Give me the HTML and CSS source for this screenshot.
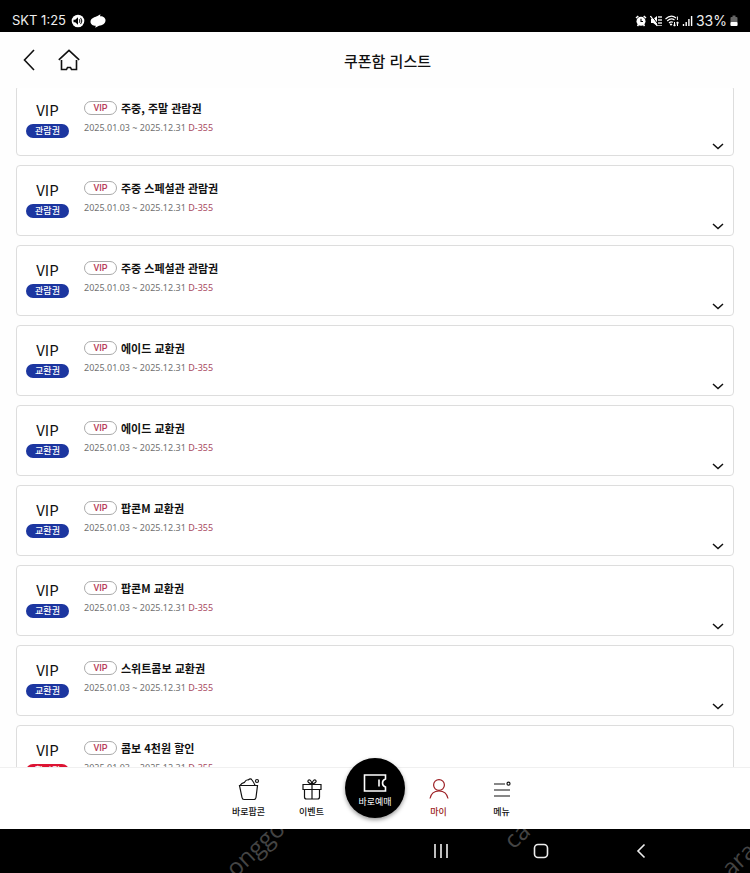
FILE: index.html
```html
<!DOCTYPE html>
<html lang="ko">
<head>
    <meta charset="UTF-8">
    <meta name="viewport" content="width=device-width, initial-scale=1">
    <title>쿠폰함 리스트</title>
    <link rel="stylesheet" href="styles.css">
</head>
<body>
    <!-- Status bar -->
    <div class="status">
        <div class="status-left">
            <span>SKT 1:25</span>
            <svg width="14" height="14" viewBox="0 0 14 14"><circle cx="7" cy="7" r="6.3" fill="#fff"/><path d="M2.5 5.7h1.7L7 3.3v7.4L4.200 8.300H2.500z" fill="#000"/><path d="M8.300 5.300q1.300 1.700 0 3.400M9.600 3.900q2.600 3.100 0 6.200" fill="none" stroke="#000" stroke-width="1"/></svg>
            <svg width="16" height="14" viewBox="0 0 16 14"><path d="M10.500 0.300L10 2.300C13 2 15.800 4 15.500 6.800C15.200 9.600 12.500 11.500 9 11.800L5.200 13.800L5.800 11.800C3 11.800 0.300 10.300 0.500 7.500C0.800 4 5 3 7 2.200Z" fill="#fff"/></svg>
        </div>
        <div class="status-right">
            <svg width="12" height="12" viewBox="0 0 12 12"><path d="M1 3L3.300 1M11 3L8.700 1M2.500 11l1-1.500M9.500 11l-1-1.500" stroke="#fff" stroke-width="1.500"/><circle cx="6" cy="6.300" r="4.500" fill="#fff"/><path d="M6 3.800v2.700h2" fill="none" stroke="#000" stroke-width="1.100"/></svg>
            <svg width="12" height="12" viewBox="0 0 12 12"><path d="M1 4h2.200L7 1v10L3.200 8H1z" fill="#fff"/><path d="M1.500 0.500L8.500 10" stroke="#000" stroke-width="1"/><path d="M0.500 1L7.500 11" stroke="#fff" stroke-width="1.300"/><path d="M9 1v10M11 1v10" stroke="#fff" stroke-width="1.300" stroke-dasharray="2 1"/></svg>
            <svg width="14" height="12" viewBox="0 0 14 12"><path d="M0.500 4Q6 -1 11 3M2.200 6Q6 2.500 9.500 5M4 8Q6 6 8 7.300" fill="none" stroke="#fff" stroke-width="1.200"/><circle cx="6" cy="9.500" r="1.100" fill="#fff"/><path d="M9.500 11V7M8.200 9.600l1.300 1.600 1.300-1.600M12.500 7v4M11.300 8.400l1.200-1.600 1.200 1.600M12.400 1.500v3.500" fill="none" stroke="#fff" stroke-width="1"/></svg>
            <svg width="11" height="12" viewBox="0 0 11 12"><path d="M1.500 11V9M4.200 11V7M6.900 11V4M9.600 11V1" stroke="#fff" stroke-width="1.400"/></svg>
            <span class="percent">33%</span>
            <svg width="8" height="12" viewBox="0 0 8 12"><rect x="2.500" y="0.500" width="3" height="2" fill="#666"/><rect x="0.500" y="2" width="7" height="9" rx="1" fill="#666"/><rect x="0.500" y="7" width="7" height="4" rx="1" fill="#fff"/></svg>
        </div>
    </div>

    <!-- Page header -->
    <header class="header">
        <button type="button" class="icon-button" aria-label="뒤로">
            <svg width="12" height="22" viewBox="0 0 12 22"><path d="M11 1L1.500 11L11 21" fill="none" stroke="#111" stroke-width="1.600"/></svg>
        </button>
        <a class="icon-button" href="#" aria-label="홈">
            <svg width="22" height="22" viewBox="0 0 22 22"><path d="M0.800 10.800L11 1.300L21.200 10.800M3.500 11V20.500H8.500L9.500 18.500H12.500L13.500 20.500H18.500V11" fill="none" stroke="#111" stroke-width="1.600"/></svg>
        </a>
        <h1>쿠폰함 리스트</h1>
    </header>

    <!-- Coupon list -->
    <main class="content">
        <ul class="coupons">
            <li class="coupon">
                <div class="kind"><span class="grade">VIP</span><span class="badge">관람권</span></div>
                <div class="info">
                    <h2><span class="tag">VIP</span>주중, 주말 관람권</h2>
                    <p>2025.01.03 ~ 2025.12.31 <span class="dday">D-355</span></p>
                </div>
                <button type="button" class="more" aria-label="펼치기"><svg width="12" height="7" viewBox="0 0 12 7"><path d="M1 1L6 5.500L11 1"/></svg></button>
            </li>
            <li class="coupon">
                <div class="kind"><span class="grade">VIP</span><span class="badge">관람권</span></div>
                <div class="info">
                    <h2><span class="tag">VIP</span>주중 스페셜관 관람권</h2>
                    <p>2025.01.03 ~ 2025.12.31 <span class="dday">D-355</span></p>
                </div>
                <button type="button" class="more" aria-label="펼치기"><svg width="12" height="7" viewBox="0 0 12 7"><path d="M1 1L6 5.500L11 1"/></svg></button>
            </li>
            <li class="coupon">
                <div class="kind"><span class="grade">VIP</span><span class="badge">관람권</span></div>
                <div class="info">
                    <h2><span class="tag">VIP</span>주중 스페셜관 관람권</h2>
                    <p>2025.01.03 ~ 2025.12.31 <span class="dday">D-355</span></p>
                </div>
                <button type="button" class="more" aria-label="펼치기"><svg width="12" height="7" viewBox="0 0 12 7"><path d="M1 1L6 5.500L11 1"/></svg></button>
            </li>
            <li class="coupon">
                <div class="kind"><span class="grade">VIP</span><span class="badge">교환권</span></div>
                <div class="info">
                    <h2><span class="tag">VIP</span>에이드 교환권</h2>
                    <p>2025.01.03 ~ 2025.12.31 <span class="dday">D-355</span></p>
                </div>
                <button type="button" class="more" aria-label="펼치기"><svg width="12" height="7" viewBox="0 0 12 7"><path d="M1 1L6 5.500L11 1"/></svg></button>
            </li>
            <li class="coupon">
                <div class="kind"><span class="grade">VIP</span><span class="badge">교환권</span></div>
                <div class="info">
                    <h2><span class="tag">VIP</span>에이드 교환권</h2>
                    <p>2025.01.03 ~ 2025.12.31 <span class="dday">D-355</span></p>
                </div>
                <button type="button" class="more" aria-label="펼치기"><svg width="12" height="7" viewBox="0 0 12 7"><path d="M1 1L6 5.500L11 1"/></svg></button>
            </li>
            <li class="coupon">
                <div class="kind"><span class="grade">VIP</span><span class="badge">교환권</span></div>
                <div class="info">
                    <h2><span class="tag">VIP</span>팝콘M 교환권</h2>
                    <p>2025.01.03 ~ 2025.12.31 <span class="dday">D-355</span></p>
                </div>
                <button type="button" class="more" aria-label="펼치기"><svg width="12" height="7" viewBox="0 0 12 7"><path d="M1 1L6 5.500L11 1"/></svg></button>
            </li>
            <li class="coupon">
                <div class="kind"><span class="grade">VIP</span><span class="badge">교환권</span></div>
                <div class="info">
                    <h2><span class="tag">VIP</span>팝콘M 교환권</h2>
                    <p>2025.01.03 ~ 2025.12.31 <span class="dday">D-355</span></p>
                </div>
                <button type="button" class="more" aria-label="펼치기"><svg width="12" height="7" viewBox="0 0 12 7"><path d="M1 1L6 5.500L11 1"/></svg></button>
            </li>
            <li class="coupon">
                <div class="kind"><span class="grade">VIP</span><span class="badge">교환권</span></div>
                <div class="info">
                    <h2><span class="tag">VIP</span>스위트콤보 교환권</h2>
                    <p>2025.01.03 ~ 2025.12.31 <span class="dday">D-355</span></p>
                </div>
                <button type="button" class="more" aria-label="펼치기"><svg width="12" height="7" viewBox="0 0 12 7"><path d="M1 1L6 5.500L11 1"/></svg></button>
            </li>
            <li class="coupon">
                <div class="kind"><span class="grade">VIP</span><span class="badge discount">할인권</span></div>
                <div class="info">
                    <h2><span class="tag">VIP</span>콤보 4천원 할인</h2>
                    <p>2025.01.03 ~ 2025.12.31 <span class="dday">D-355</span></p>
                </div>
                <button type="button" class="more" aria-label="펼치기"><svg width="12" height="7" viewBox="0 0 12 7"><path d="M1 1L6 5.500L11 1"/></svg></button>
            </li>
        </ul>
    </main>

    <!-- Tab bar -->
    <nav class="tabs">
        <a class="tab" href="#">
            <svg width="24" height="24" viewBox="0 0 24 24"><path d="M2.500 8.500H20.500L19 20.500Q18.700 22.500 17 22.500H7Q5.300 22.500 5 20.500ZM3 8.500Q4.500 6 7.500 5.300Q9 2.500 11.500 2.800Q13.500 1 15 3Q17 5.500 18 8.500"/><circle cx="20" cy="4" r="1.500"/></svg>
            바로팝콘
        </a>
        <a class="tab" href="#">
            <svg width="24" height="24" viewBox="0 0 24 24"><path d="M3 7.500H21V12.500H3ZM4.500 12.500V20Q4.500 22 6.500 22H17.500Q19.500 22 19.500 20V12.500M12 7.500V22M12 7C9 6.500 7 4.800 8.200 3.300C9.500 2 11.500 3.500 12 7C12.500 3.500 14.500 2 15.800 3.300C17 4.800 15 6.500 12 7"/></svg>
            이벤트
        </a>
        <a class="tab booking" href="#">
            <svg width="24" height="20" viewBox="0 0 24 20"><path d="M1.500 2H22.500V6Q19.500 7 19.500 10Q19.500 13 22.500 14V18H1.500Z"/><path d="M16 6.500V13.500"/></svg>
            바로예매
        </a>
        <a class="tab active" href="#">
            <svg width="24" height="24" viewBox="0 0 24 24"><circle cx="12" cy="8" r="5.400"/><path d="M3 21.500Q4.500 14 12 14Q19.500 14 21 21.500"/></svg>
            마이
        </a>
        <a class="tab" href="#">
            <svg width="24" height="24" viewBox="0 0 24 24"><path d="M4 7H15M4 13H20M4 19H20"/><circle cx="18.500" cy="6.700" r="1.500"/></svg>
            메뉴
        </a>
    </nav>

    <!-- System navigation -->
    <div class="system">
        <span class="mark mark-left" aria-hidden="true">onggo</span>
        <span class="mark mark-middle" aria-hidden="true">ca</span>
        <span class="mark mark-right" aria-hidden="true">ara</span>
        <button type="button" aria-label="최근 앱"><svg width="16" height="16" viewBox="0 0 16 16"><path d="M2 1V15M8 1V15M14 1V15"/></svg></button>
        <button type="button" aria-label="홈 화면"><svg width="16" height="16" viewBox="0 0 16 16"><rect x="1.500" y="1.500" width="13" height="13" rx="3.500"/></svg></button>
        <button type="button" aria-label="이전"><svg width="16" height="16" viewBox="0 0 16 16"><path d="M11.500 1.500L5 8L11.500 14.500"/></svg></button>
    </div>
</body>
</html>
```
FILE: styles.css
```css
* {
    box-sizing: border-box;
}

body {
    margin: 0;
    height: 100vh;
    display: flex;
    flex-direction: column;
    overflow: hidden;
    background: #fefefe;
    color: #111111;
    font-family: "Noto Sans CJK KR", sans-serif;
}

button {
    padding: 0;
    border: none;
    background: none;
    cursor: pointer;
}

a {
    color: inherit;
    text-decoration: none;
}

svg {
    display: block;
}

/* Status bar */
.status {
    flex: none;
    height: 32px;
    padding: 9px 12px 0;
    display: flex;
    justify-content: space-between;
    background: #000000;
    color: #eeeeee;
    font-family: Inter, sans-serif;
    font-size: 13px;
    line-height: 23px;
}

.status-left,
.status-right {
    display: flex;
    align-items: center;
    gap: 3px;
}

.status-left {
    gap: 5px;
}

.percent {
    font-size: 14px;
}

/* Page header */
.header {
    flex: none;
    height: 56px;
    padding: 0 68px 0 23px;
    display: flex;
    align-items: center;
}

.icon-button {
    width: 35px;
}

.header h1 {
    flex: 1;
    margin: 0;
    text-align: center;
    font-size: 15px;
    font-weight: 500;
}

/* Coupon list, scrolled a little under the header */
.content {
    flex: 1;
    min-height: 0;
    overflow: hidden;
}

.coupons {
    margin: -3px 16px 0;
    padding: 0;
    display: grid;
    gap: 9px;
    list-style: none;
}

.coupon {
    min-height: 71px;
    padding: 13px 9px 5px;
    display: flex;
    gap: 15px;
    border: 1px solid #dddddd;
    border-radius: 4px;
    background: #ffffff;
}

.kind {
    width: 43px;
    padding-top: 1px;
    text-align: center;
}

.grade {
    display: block;
    font-size: 15px;
    line-height: 20px;
}

.badge {
    display: block;
    margin-top: 4px;
    border-radius: 7px;
    background: #1c36a0;
    color: #ffffff;
    font-size: 9px;
    font-weight: 500;
    line-height: 14px;
}

.badge.discount {
    background: #dc1433;
}

.info {
    flex: 1;
}

.info h2 {
    margin: 0;
    display: flex;
    align-items: center;
    gap: 4px;
    font-size: 11px;
    font-weight: 700;
    line-height: 18px;
}

.tag {
    width: 33px;
    border: 1px solid #aaaaaa;
    border-radius: 7px;
    color: #b8405a;
    text-align: center;
    font-family: Roboto, sans-serif;
    font-size: 9px;
    font-weight: 500;
    line-height: 12px;
}

.info p {
    margin: 3px 0 0;
    color: #707070;
    font-family: "Noto Sans", sans-serif;
    font-size: 9px;
    line-height: 16px;
}

.dday {
    color: #a84860;
}

.more {
    align-self: flex-end;
}

.more path {
    fill: none;
    stroke: #111111;
    stroke-width: 1.5;
}

/* Tab bar */
.tabs {
    flex: none;
    height: 62px;
    display: flex;
    justify-content: center;
    border-top: 1px solid #f0f0f0;
    background: #ffffff;
}

.tab {
    width: 63px;
    padding-top: 9px;
    display: flex;
    flex-direction: column;
    align-items: center;
    gap: 4px;
    font-size: 9px;
    font-weight: 500;
    line-height: 14px;
}

.tab path,
.tab circle {
    fill: none;
    stroke: currentColor;
    stroke-width: 1.2;
}

.tab.active {
    color: #9c1f24;
}

.tab.booking {
    width: 60px;
    height: 60px;
    margin: -10px 2px 0;
    padding-top: 15px;
    gap: 2px;
    border-radius: 50%;
    background: #000000;
    box-shadow: 0 2px 4px rgba(0, 0, 0, 0.4);
    color: #ffffff;
    font-weight: 400;
}

.booking path {
    stroke-width: 1.6;
}

/* System navigation */
.system {
    position: relative;
    flex: none;
    height: 44px;
    padding-left: 331px;
    display: flex;
    justify-content: center;
    align-items: center;
    gap: 84px;
    overflow: hidden;
    background: #000000;
}

.system svg {
    fill: none;
    stroke: #eeeeee;
    stroke-width: 1.6;
}

/* Diagonal watermark running across the bar */
.mark {
    position: absolute;
    color: #444444;
    font-family: "Open Sans", sans-serif;
    font-size: 24px;
    line-height: 24px;
    transform: rotate(-43deg);
}

.mark-left {
    left: 220px;
    top: 7px;
}

.mark-middle {
    left: 504px;
    top: -6px;
}

.mark-right {
    left: 720px;
    top: 18px;
}
```
